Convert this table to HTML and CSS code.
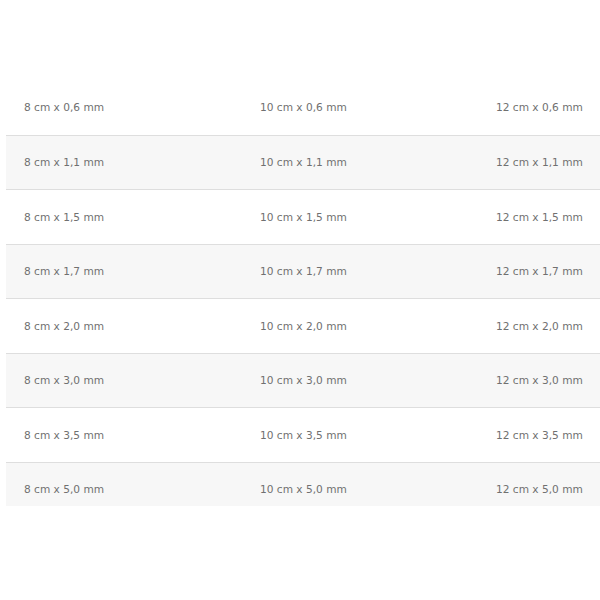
FILE: index.html
```html
<!DOCTYPE html>
<html>
<head>
<meta charset="utf-8">
<link rel="stylesheet" href="styles.css">
</head>
<body>
<div class="page">
  <div class="table">
    <div class="row"><div class="cell">8 cm x 0,6 mm</div><div class="cell">10 cm x 0,6 mm</div><div class="cell">12 cm x 0,6 mm</div></div>
    <div class="row alt"><div class="cell">8 cm x 1,1 mm</div><div class="cell">10 cm x 1,1 mm</div><div class="cell">12 cm x 1,1 mm</div></div>
    <div class="row"><div class="cell">8 cm x 1,5 mm</div><div class="cell">10 cm x 1,5 mm</div><div class="cell">12 cm x 1,5 mm</div></div>
    <div class="row alt"><div class="cell">8 cm x 1,7 mm</div><div class="cell">10 cm x 1,7 mm</div><div class="cell">12 cm x 1,7 mm</div></div>
    <div class="row"><div class="cell">8 cm x 2,0 mm</div><div class="cell">10 cm x 2,0 mm</div><div class="cell">12 cm x 2,0 mm</div></div>
    <div class="row alt"><div class="cell">8 cm x 3,0 mm</div><div class="cell">10 cm x 3,0 mm</div><div class="cell">12 cm x 3,0 mm</div></div>
    <div class="row"><div class="cell">8 cm x 3,5 mm</div><div class="cell">10 cm x 3,5 mm</div><div class="cell">12 cm x 3,5 mm</div></div>
    <div class="row alt"><div class="cell">8 cm x 5,0 mm</div><div class="cell">10 cm x 5,0 mm</div><div class="cell">12 cm x 5,0 mm</div></div>
  </div>
</div>
</body>
</html>
```
FILE: styles.css
```css
html, body {
  margin: 0;
  padding: 0;
  background: #ffffff;
  overflow: hidden;
}
.page {
  width: 600px;
  height: 600px;
  padding-top: 80px;
  padding-left: 6px;
  box-sizing: border-box;
  overflow: hidden;
}
.table {
  width: 708px;
  height: 426px;
  overflow: hidden;
  font-family: "DejaVu Sans", sans-serif;
  font-size: 10.6px;
  color: #707070;
  letter-spacing: 0;
}
.row {
  display: grid;
  grid-template-columns: repeat(3, 236px);
  height: 54.5px;
  align-items: center;
  box-sizing: border-box;
  border-top: 1px solid #dedede;
}
.row:first-child {
  border-top: none;
}
.row.alt {
  background: #f7f7f7;
}
.cell {
  padding-left: 18px;
  white-space: nowrap;
}
```
